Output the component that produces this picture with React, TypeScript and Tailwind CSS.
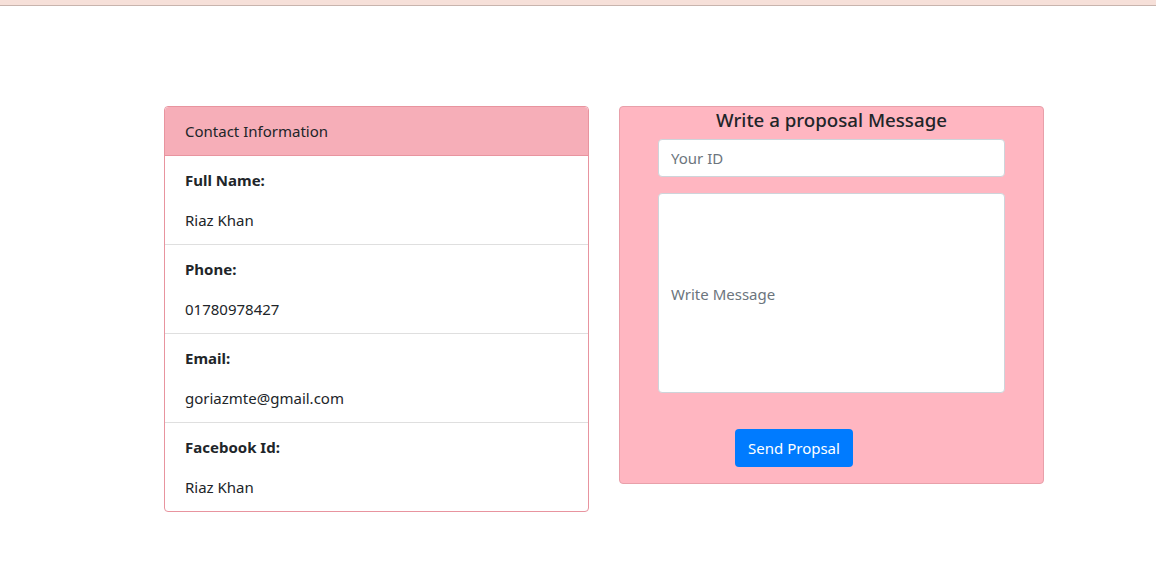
export default function App() {
  const rows = [
    { label: "Full Name:", value: "Riaz Khan" },
    { label: "Phone:", value: "01780978427" },
    { label: "Email:", value: "goriazmte@gmail.com" },
    { label: "Facebook Id:", value: "Riaz Khan" },
  ];

  return (
    <div
      className="min-h-[580px] bg-white text-[#212529] text-[15px]"
      style={{ fontFamily: '"Noto Sans", "Open Sans", sans-serif' }}
    >
      <div className="h-[6px] bg-[#f6e0d9] border-b border-[#c8b4ad]" />

      <div className="flex items-start gap-[30px] pl-[164px] pt-[100px]">
        <div className="w-[425px] rounded border border-[#e8949f] bg-white">
          <div className="px-5 py-3 bg-[#f6aeb8] border-b border-[#e8949f] rounded-t leading-6">
            Contact Information
          </div>
          {rows.map((r, i) => (
            <div
              key={r.label}
              className={
                i > 0 ? "px-5 py-3 border-t border-[#dfdfdf]" : "px-5 py-3"
              }
            >
              <p className="font-bold leading-6 mb-4">{r.label}</p>
              <p className="leading-6">{r.value}</p>
            </div>
          ))}
        </div>

        <div className="w-[425px] h-[378px] rounded border border-[#e8a0aa] bg-[#ffb6c1] flex flex-col items-center">
          <h5 className="text-[18.7px] font-medium leading-6 pt-[1px] mb-[7px]">
            Write a proposal Message
          </h5>
          <div className="w-[347px] flex flex-col">
            <input
              className="h-[38px] rounded border border-[#ced4da] bg-white px-3 text-[15px] placeholder:text-[#6c757d] outline-none mb-4"
              placeholder="Your ID"
            />
            <div className="h-[200px] rounded border border-[#ced4da] bg-white px-3 flex items-center pt-[2px]">
              <span className="text-[#6c757d]">Write Message</span>
            </div>
            <div className="mt-9 pl-[77px]">
              <button className="h-[38px] w-[118px] rounded bg-[#007bff] text-white text-[15px]">
                Send Propsal
              </button>
            </div>
          </div>
        </div>
      </div>
    </div>
  );
}
